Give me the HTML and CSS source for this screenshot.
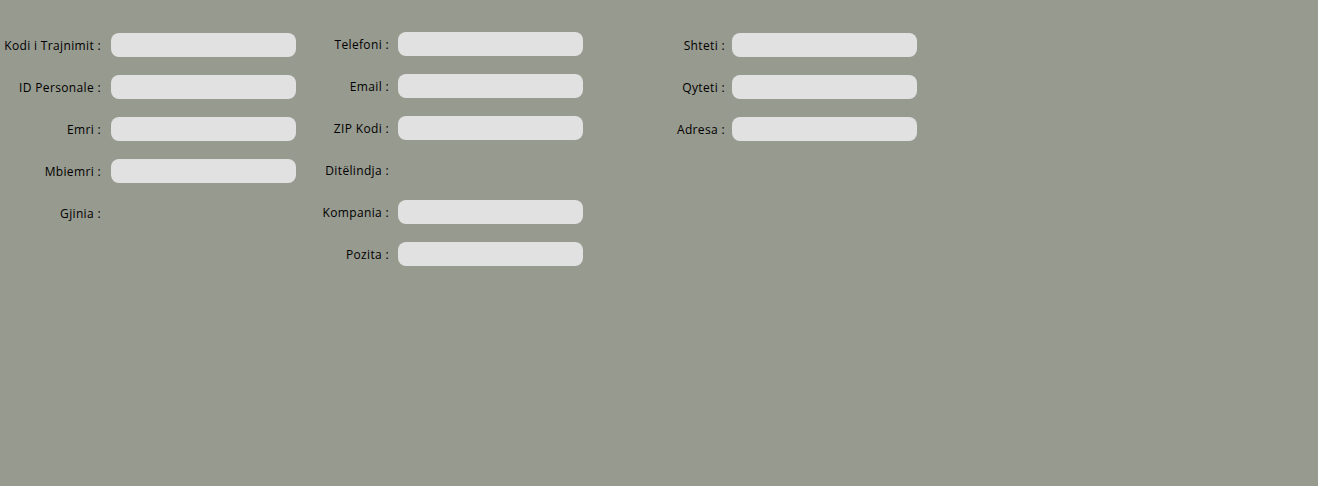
FILE: index.html
```html
<!DOCTYPE html>
<html>
<head>
<meta charset="utf-8">
<link rel="stylesheet" href="styles.css">
</head>
<body>
<div class="form">
  <div class="col col1">
    <div class="row"><span class="label">Kodi i Trajnimit :</span><span class="field"></span></div>
    <div class="row"><span class="label">ID Personale :</span><span class="field"></span></div>
    <div class="row"><span class="label">Emri :</span><span class="field"></span></div>
    <div class="row"><span class="label">Mbiemri :</span><span class="field"></span></div>
    <div class="row"><span class="label">Gjinia :</span></div>
  </div>
  <div class="col col2">
    <div class="row"><span class="label">Telefoni :</span><span class="field"></span></div>
    <div class="row"><span class="label">Email :</span><span class="field"></span></div>
    <div class="row"><span class="label">ZIP Kodi :</span><span class="field"></span></div>
    <div class="row"><span class="label">Ditëlindja :</span></div>
    <div class="row"><span class="label">Kompania :</span><span class="field"></span></div>
    <div class="row"><span class="label">Pozita :</span><span class="field"></span></div>
  </div>
  <div class="col col3">
    <div class="row"><span class="label">Shteti :</span><span class="field"></span></div>
    <div class="row"><span class="label">Qyteti :</span><span class="field"></span></div>
    <div class="row"><span class="label">Adresa :</span><span class="field"></span></div>
  </div>
</div>
</body>
</html>
```
FILE: styles.css
```css
html, body {
  margin: 0;
  padding: 0;
  background: #979a8f;
  height: 100%;
}
body {
  font-family: "Open Sans", sans-serif;
  font-size: 12px;
  letter-spacing: 0.35px;
  color: #000;
}
.form {
  display: flex;
  padding-top: 32px;
}
.col {
  display: flex;
  flex-direction: column;
  gap: 18px;
}
.col1 { padding-top: 1px; }
.col3 { padding-top: 1px; }
.row {
  display: flex;
  align-items: center;
  height: 24px;
}
.label {
  text-align: right;
  white-space: nowrap;
}
.col1 .label { width: 101px; margin-right: 10px; }
.col2 .label { width: 93px; margin-right: 9px; }
.col3 .label { width: 142px; margin-right: 7px; }
.field {
  display: block;
  width: 185px;
  height: 24px;
  background: #e1e1e1;
  border-radius: 8px;
}
```
